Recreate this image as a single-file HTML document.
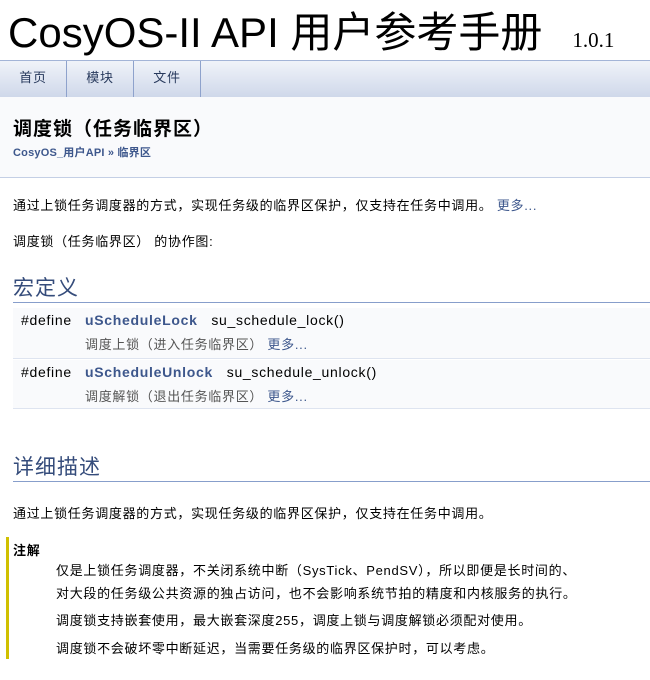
<!DOCTYPE html>
<html><head><meta charset="utf-8"><style>
body{margin:0;width:650px;height:680px;overflow:hidden;background:#fff;font-family:"Liberation Sans","Noto Sans CJK SC",sans-serif;font-size:13px;color:#000;letter-spacing:0.7px}
.title{position:absolute;left:8px;top:5px;font-size:42px;line-height:56px;white-space:nowrap;letter-spacing:0}
.title span{font-family:"Liberation Serif","Noto Serif CJK SC",serif;font-size:21px;margin-left:30px}
.nav{position:absolute;left:0;top:60px;width:650px;height:37px;background:linear-gradient(#f0f3f9,#cfd8ea);border-top:1px solid #a3b4d7;box-sizing:border-box}
.nav div{float:left;width:66px;height:36px;line-height:34px;text-align:center;border-right:1px solid #8ea2cc;font-size:13px;color:#283a5d}
.hdr{position:absolute;left:0;top:97px;width:650px;height:80px;background:#f9fafc;border-bottom:1px solid #c4cfe5}
.hdr h1{position:absolute;left:13px;top:17px;margin:0;font-size:19px;font-weight:bold;letter-spacing:1px}
.hdr .bc{position:absolute;left:13px;top:47px;font-size:11px;font-weight:bold;color:#3d578c;letter-spacing:0.2px}
.p{position:absolute;left:13px;font-size:13px;white-space:nowrap}
a{color:#3d578c;text-decoration:none}
.h2{position:absolute;left:13px;width:637px;font-size:21px;color:#354c7b;border-bottom:1px solid #879ecb;line-height:26px;letter-spacing:1px}
.row{position:absolute;left:13px;width:637px;background:#f9fafc;border-bottom:1px solid #dee4f0}
.row .a{position:absolute;left:8px;top:4px;font-size:14px}
.row .b{position:absolute;left:72px;top:4px;font-size:14px;white-space:nowrap}
.row .b b{color:#3d578c}
.row .c{position:absolute;left:72px;top:26px;font-size:13px;color:#555;white-space:nowrap}
.note{position:absolute;left:6px;top:537px;width:640px;height:122px;border-left:3px solid #d0c000}
.note .t{position:absolute;left:4px;top:3px;font-weight:bold;font-size:13px}
.note .l{position:absolute;left:47px;font-size:13px;white-space:nowrap}
</style></head><body>
<div class="title">CosyOS-II API 用户参考手册<span>1.0.1</span></div>
<div class="nav"><div>首页</div><div>模块</div><div>文件</div></div>
<div class="hdr"><h1>调度锁（任务临界区）</h1><div class="bc">CosyOS_用户API » 临界区</div></div>
<div class="p" style="top:195px">通过上锁任务调度器的方式，实现任务级的临界区保护，仅支持在任务中调用。 <a>更多...</a></div>
<div class="p" style="top:231px">调度锁（任务临界区） 的协作图:</div>
<div class="h2" style="top:276px">宏定义</div>
<div class="row" style="top:308px;height:50px"><div class="a">#define</div><div class="b"><b>uScheduleLock</b>&nbsp;&nbsp;&nbsp;su_schedule_lock()</div><div class="c">调度上锁（进入任务临界区） <a>更多...</a></div></div>
<div class="row" style="top:360px;height:48px"><div class="a">#define</div><div class="b"><b>uScheduleUnlock</b>&nbsp;&nbsp;&nbsp;su_schedule_unlock()</div><div class="c">调度解锁（退出任务临界区） <a>更多...</a></div></div>
<div class="h2" style="top:455px">详细描述</div>
<div class="p" style="top:503px">通过上锁任务调度器的方式，实现任务级的临界区保护，仅支持在任务中调用。</div>
<div class="note"><div class="t">注解</div>
<div class="l" style="top:23px">仅是上锁任务调度器，不关闭系统中断（SysTick、PendSV），所以即便是长时间的、</div>
<div class="l" style="top:46px">对大段的任务级公共资源的独占访问，也不会影响系统节拍的精度和内核服务的执行。</div>
<div class="l" style="top:73px">调度锁支持嵌套使用，最大嵌套深度255，调度上锁与调度解锁必须配对使用。</div>
<div class="l" style="top:101px">调度锁不会破坏零中断延迟，当需要任务级的临界区保护时，可以考虑。</div>
</div>
</body></html>
